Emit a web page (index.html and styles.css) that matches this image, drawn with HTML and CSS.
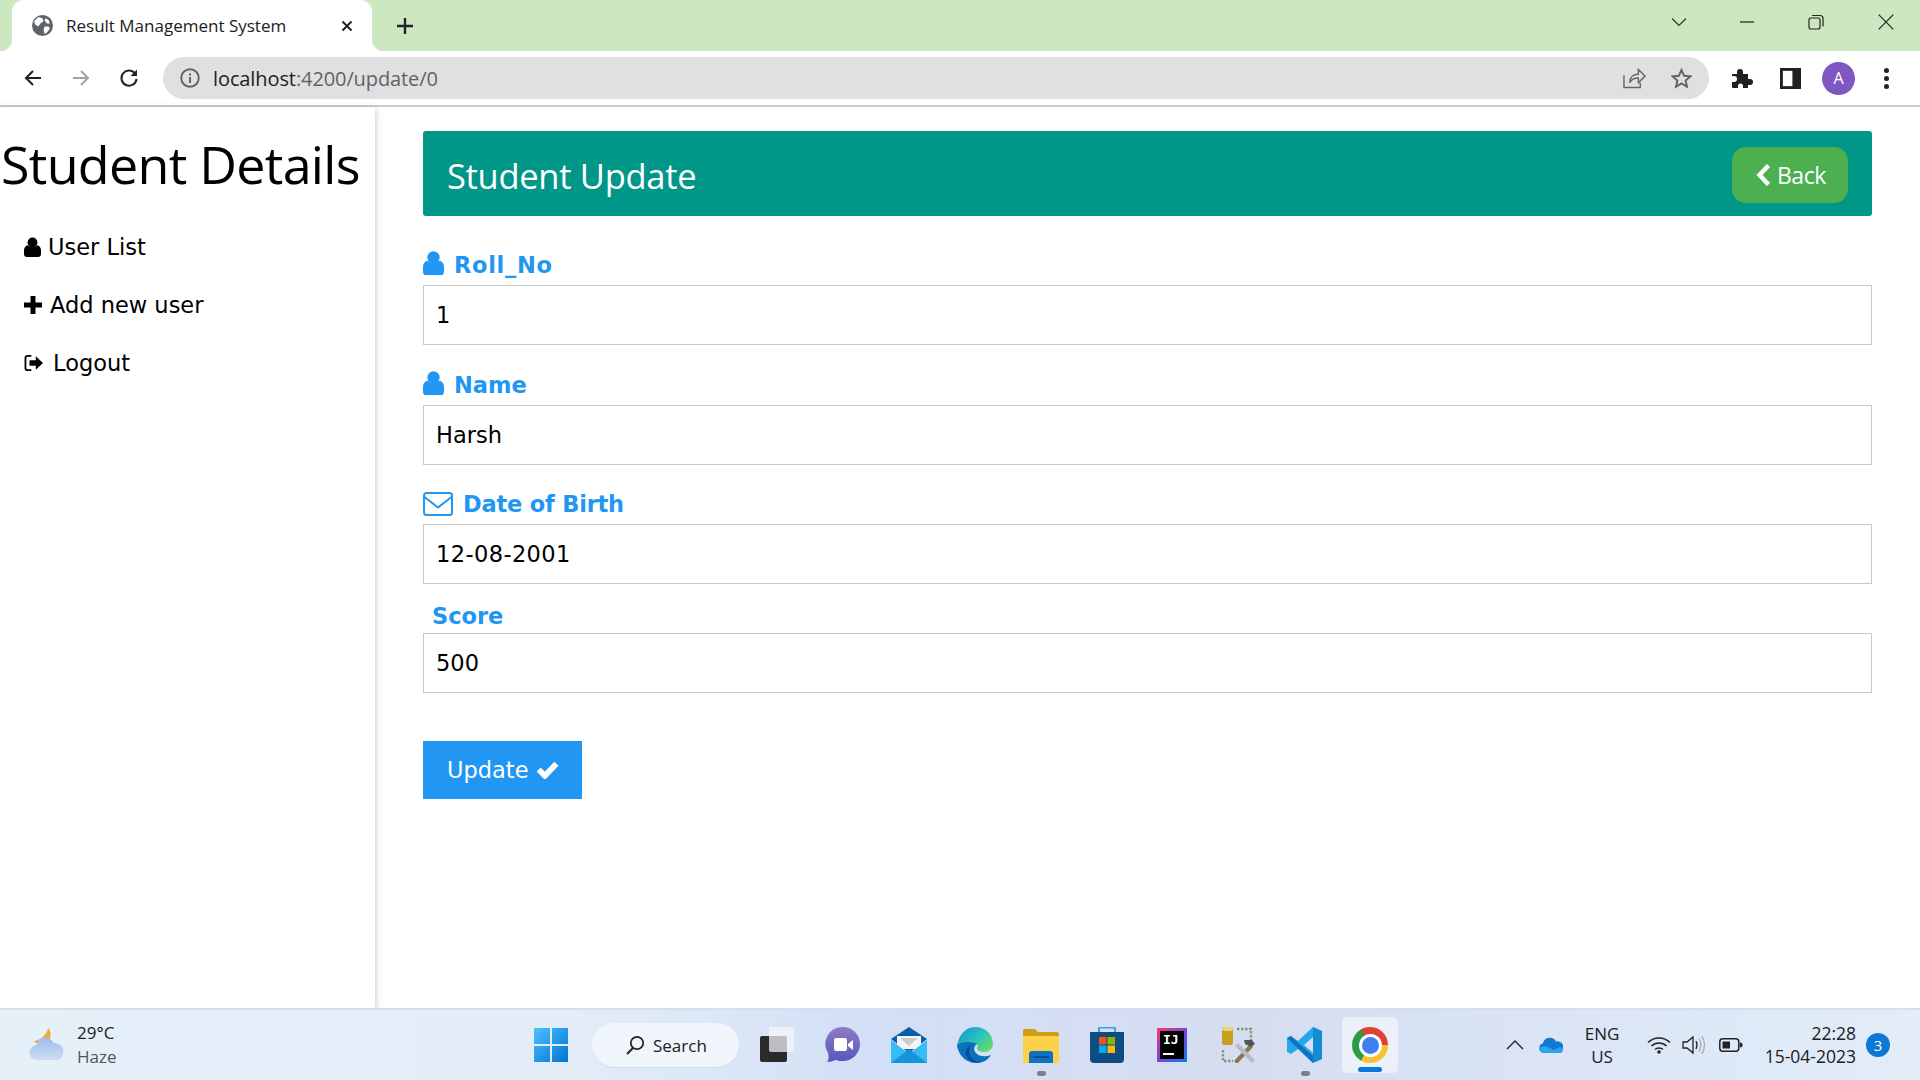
FILE: index.html
```html
<!DOCTYPE html>
<html lang="en">
<head>
  <meta charset="UTF-8">
  <title>Result Management System</title>
  <link rel="stylesheet" href="styles.css">
</head>
<body>
<div class="screen">

  <div class="tabstrip">
    <div class="tab">
      <svg class="tab-globe" viewBox="0 0 20 20"><circle cx="10" cy="10" r="10" fill="#5f6368"/><path d="M6 2l4 1 1 3-3 2-2 3-3-2-1-3zM12 11l4 0 1 2-3 4-2 1-1-4zM13 3l3 2 1 3-3 0-2-3z" fill="#fff"/></svg>
      <span class="tab-title">Result Management System</span>
      <svg class="tab-close" viewBox="0 0 12 12"><path d="M1.5 1.5l9 9M10.5 1.5l-9 9" stroke="#202124" stroke-width="2"/></svg>
    </div>
    <svg class="new-tab" viewBox="0 0 18 18"><path d="M9 1v16M1 9h16" stroke="#202124" stroke-width="2.4"/></svg>
    <div class="window-btns">
      <svg class="win-chevron" viewBox="0 0 16 10"><path d="M1 1.5l7 7 7-7" fill="none" stroke="#333" stroke-width="1.2"/></svg>
      <svg class="win-min" viewBox="0 0 16 10"><path d="M0 5h15" stroke="#222" stroke-width="1.3"/></svg>
      <svg class="win-restore" viewBox="0 0 16 16"><path d="M4 1.5h8q3 0 3 3v8M1 6q0-2 2-2h7q2 0 2 2v7q0 2-2 2H3q-2 0-2-2z" fill="none" stroke="#222" stroke-width="1.2"/></svg>
      <svg class="win-close" viewBox="0 0 16 16"><path d="M.7.7l14.6 14.6M15.3.7L.7 15.3" stroke="#222" stroke-width="1.2"/></svg>
    </div>
  </div>

  <div class="toolbar">
    <svg class="tool-icon" viewBox="0 0 20 20"><path d="M18 10H3M10 3l-7 7 7 7" fill="none" stroke="#202124" stroke-width="2"/></svg>
    <svg class="tool-icon" viewBox="0 0 20 20"><path d="M2 10h15M10 3l7 7-7 7" fill="none" stroke="#a3a3a3" stroke-width="2"/></svg>
    <svg class="tool-icon" viewBox="0 0 20 20"><path d="M16.500 6A7.600 7.600 0 1 0 17.600 11" fill="none" stroke="#202124" stroke-width="2"/><path d="M18 1.500v6.500h-6.500z" fill="#202124"/></svg>
    <div class="omnibox">
      <svg class="omni-info" viewBox="0 0 20 20"><circle cx="10" cy="10" r="8.800" fill="none" stroke="#5f6368" stroke-width="1.900"/><path d="M10 9v6M10 5.500v2" stroke="#5f6368" stroke-width="2"/></svg>
      <span class="url"><span class="url-host">localhost</span>:4200/update/0</span>
      <svg class="omni-share" viewBox="0 0 24 22"><path d="M1 8v13h17v-5M7 16c0-6 4-9 9-9V2l7 7-7 7v-5c-4 0-7 1-9 5z" fill="none" stroke="#666" stroke-width="1.500"/></svg>
      <svg class="omni-star" viewBox="0 0 22 22"><path d="M11 2l2.700 6.100 6.600.6-5 4.400 1.500 6.500L11 16.200l-5.800 3.400 1.500-6.500-5-4.400 6.600-.6z" fill="none" stroke="#5f6368" stroke-width="2"/></svg>
    </div>
    <svg class="ext-icon" viewBox="0 0 22 22"><path d="M1 7h5V5a3 3 0 0 1 6 0v2h5v5h2a3 3 0 0 1 0 6h-2v3h-5v-2a2.500 2.500 0 0 0-5 0v2H2q-1 0-1-1v-5h2a3 3 0 0 0 0-6H1z" fill="#202124"/></svg>
    <svg class="panel-icon" viewBox="0 0 22 22"><path d="M0 0h22v22H0z" fill="#202124"/><path d="M3 3h10v16H3z" fill="#fff"/></svg>
    <div class="avatar">A</div>
    <div class="dots"><i></i><i></i><i></i></div>
  </div>

  <div class="page">
    <aside class="sidebar">
      <h1 class="side-title">Student Details</h1>
      <a class="nav-item">
        <svg class="nav-icon icon-user" viewBox="0 0 24 28"><use href="#user"/></svg>User List
      </a>
      <a class="nav-item">
        <svg class="nav-icon icon-plus" viewBox="0 0 20 20"><path d="M10 0v20M0 10h20" stroke="#000" stroke-width="5.500"/></svg>Add new user
      </a>
      <a class="nav-item">
        <svg class="nav-icon icon-out" viewBox="0 0 22 20"><path d="M8 2H4Q1.500 2 1.500 4.500v11Q1.500 18 4 18h4" fill="none" stroke="#000" stroke-width="2"/><path d="M13 2.500L21 10l-8 7.500V13H6V7h7z" fill="#000"/></svg>Logout
      </a>
    </aside>

    <main class="content">
      <div class="panel-head">
        <h2 class="panel-title">Student Update</h2>
        <button class="back-btn">
          <svg class="back-icon" viewBox="0 0 14 24"><path d="M12 2.500L3 12l9 9.500" fill="none" stroke="#fff" stroke-width="4.500"/></svg>Back
        </button>
      </div>

      <form class="form">
        <div class="field">
          <label class="field-label label-roll"><svg class="label-user" viewBox="0 0 24 28"><use href="#user"/></svg>Roll_No</label>
          <input class="field-input" value="1">
        </div>
        <div class="field">
          <label class="field-label"><svg class="label-user" viewBox="0 0 24 28"><use href="#user"/></svg>Name</label>
          <input class="field-input" value="Harsh">
        </div>
        <div class="field">
          <label class="field-label label-dob"><svg class="label-mail" viewBox="0 0 30 24"><path d="M1 3.500Q1 1 3.500 1h23Q29 1 29 3.500v17q0 2.500-2.500 2.500h-23Q1 23 1 20.500z" fill="none" stroke="#2196f3" stroke-width="2"/><path d="M1.500 5L15 15.500 28.500 5" fill="none" stroke="#2196f3" stroke-width="2"/></svg>Date of Birth</label>
          <input class="field-input field-date" value="12-08-2001">
        </div>
        <div class="field field-plain">
          <label class="field-label">Score</label>
          <input class="field-input" value="500">
        </div>
        <button class="update-btn" type="button">Update
          <svg class="check-icon" viewBox="0 0 22 18"><path d="M2.500 9l6 6L19.500 3.500" fill="none" stroke="#fff" stroke-width="5.500"/></svg>
        </button>
      </form>
    </main>
  </div>

  <footer class="taskbar">
    <div class="weather">
      <svg class="weather-icon" viewBox="0 0 36 36"><defs><linearGradient id="cloud" x1="0" y1="0" x2="0" y2="1"><stop offset="0" stop-color="#9dbdf0"/><stop offset="1" stop-color="#cfdcf3"/></linearGradient></defs><path d="M19 1c3 4 3 11-1 14-3 2-10 3-14-1 6 0 12-5 15-13z" fill="#f2a93a"/><path d="M8 33a7.500 7.500 0 0 1-1-15 9 9 0 0 1 17-2 9 9 0 0 1 5 17z" fill="url(#cloud)"/></svg>
      <div class="weather-text"><span class="temp">29°C</span><span class="haze">Haze</span></div>
    </div>

    <div class="task-center">
      <svg class="task-icon" viewBox="0 0 36 36"><defs><linearGradient id="win" x1="0" y1="0" x2="1" y2="1"><stop offset="0" stop-color="#4cc2ff"/><stop offset="1" stop-color="#0073d1"/></linearGradient></defs><path d="M1 1h16v16H1zM19 1h16v16H19zM1 19h16v16H1zM19 19h16v16H19z" fill="url(#win)"/></svg>
      <div class="search-pill">
        <svg class="search-icon" viewBox="0 0 20 20"><circle cx="12" cy="8" r="6.200" fill="none" stroke="#222" stroke-width="1.700"/><path d="M8 13l-6 6" stroke="#222" stroke-width="2"/></svg>Search
      </div>
      <svg class="task-icon" viewBox="0 0 36 36"><rect x="1" y="9" width="27" height="26" rx="2" fill="#2b2b2b"/><rect x="10" y="0" width="25" height="25" rx="2" fill="#f4f6fb" opacity=".72"/></svg>
      <svg class="task-icon" viewBox="0 0 36 36"><defs><linearGradient id="meet" x1="0" y1="0" x2="0" y2="1"><stop offset="0" stop-color="#8f7bc4"/><stop offset="1" stop-color="#5458bf"/></linearGradient></defs><path d="M18 0a17 17 0 0 1 0 34c-2 0-5 0-7-1-3 1-6 2-9 2 2-3 2-6 1-9A17 17 0 0 1 18 0z" fill="url(#meet)"/><rect x="9" y="11" width="13" height="13" rx="2" fill="#fff"/><path d="M23 17l5-4v10l-5-4z" fill="#fff"/></svg>
      <svg class="task-icon" viewBox="0 0 36 36"><path d="M0 12L18 0l18 12-18 14z" fill="#0a5ea8"/><path d="M6 9h24v13H6z" fill="#f3f4f6"/><path d="M9 11h18l-9 8z" fill="#c9ccd2"/><path d="M0 13l18 14 18-14v23H0z" fill="#34bdf4"/><path d="M0 36l18-14 18 14z" fill="#1793d8"/></svg>
      <svg class="task-icon" viewBox="0 0 36 36"><defs><linearGradient id="edgeA" x1="0" y1="0" x2="1" y2=".7"><stop offset="0" stop-color="#1a8fd0"/><stop offset=".55" stop-color="#27bfc0"/><stop offset="1" stop-color="#5fdc6c"/></linearGradient></defs><path d="M18 0c10 0 18 7 18 17 0 5-4 8-9 8-4 0-7-2-7-4l1-3c-8-4-19 0-21 2C1 9 8 0 18 0z" fill="url(#edgeA)"/><path d="M0 18c1 10 9 18 19 18 7 0 12-3 15-8-5 2-12 2-15-2-3-3-2-7 1-9-8-4-18-1-20 1z" fill="#0c70bc"/><path d="M12 24c0 6 5 11 12 11-7 2-13-2-15-7-1-4 1-8 5-10-1 2-2 4-2 6z" fill="#074a94"/></svg>
      <div class="task-slot">
        <svg class="task-icon" viewBox="0 0 36 36"><path d="M0 4q0-2 2-2h10l3 3h19q2 0 2 2v4H0z" fill="#d39c10"/><path d="M0 9h36v27H0z" fill="#fdd14a"/><path d="M6 36v-9q0-3 3-3h18q3 0 3 3v9z" fill="#0f72c0"/><path d="M10 29h16v2H10z" fill="#0a4f92"/></svg>
        <i class="run-dot"></i>
      </div>
      <svg class="task-icon" viewBox="0 0 36 36"><path d="M10 6V2q0-1.500 1.500-1.500h13Q26 .5 26 2v4" fill="none" stroke="#2aa7e6" stroke-width="2"/><path d="M1 5h34v27q0 4-4 4H5q-4 0-4-4z" fill="#0f4c81"/><path d="M10 10h7.500v7.500H10z" fill="#f1511b"/><path d="M18.500 10H26v7.500h-7.500z" fill="#80bb00"/><path d="M10 18.500h7.500V26H10z" fill="#00adef"/><path d="M18.500 18.500H26V26h-7.500z" fill="#fbbc09"/></svg>
      <svg class="task-icon" viewBox="0 0 36 36"><defs><linearGradient id="ij" x1="0" y1="0" x2="1" y2="1"><stop offset="0" stop-color="#fc3a6b"/><stop offset=".5" stop-color="#7e41d9"/><stop offset="1" stop-color="#087cfa"/></linearGradient></defs><path d="M2 1h30v34H2z" fill="url(#ij)"/><path d="M5 4h24v28H5z" fill="#000"/><path d="M8 26h11v2H8z" fill="#fff"/><text class="ij-text" x="8" y="17">IJ</text></svg>
      <svg class="task-icon" viewBox="0 0 36 36"><rect x="1" y="0" width="11" height="18" rx="2" fill="#c7a022"/><rect x="1" y="0" width="11" height="4" rx="2" fill="#e6d37a"/><path d="M16 2h14v12M2 23v11h10" fill="none" stroke="#7f9a6c" stroke-width="2.400" stroke-dasharray="2.500 1.500"/><path d="M13 34L29 17l3 3-16 17z" fill="#8a7650"/><path d="M17 16l17 17-3 3-17-17z" fill="#b8bcc2"/><path d="M23 13h8l3 4-4 3-6-3z" fill="#51565c"/></svg>
      <div class="task-slot">
        <svg class="task-icon" viewBox="0 0 36 36"><path d="M26 0l9 4v28l-9 4-15-14-7 5-4-2V11l4-2 7 5zM26 10l-9 8 9 8z" fill="#23a7ec"/><path d="M26 0l9 4v28l-9 4z" fill="#0d7cc3" opacity=".6"/><path d="M0 11l4-2 22 20v7L0 11z" fill="#0f74bd"/></svg>
        <i class="run-dot"></i>
      </div>
      <div class="task-active">
        <div class="chrome-logo"><div class="chrome-core"></div></div>
        <i class="active-bar"></i>
      </div>
    </div>

    <div class="tray">
      <svg class="tray-chevron" viewBox="0 0 18 10"><path d="M1 9l8-8 8 8" fill="none" stroke="#222" stroke-width="1.400"/></svg>
      <svg class="tray-cloud" viewBox="0 0 24 16"><path d="M5 16a5 5 0 0 1-1-9.800 7 7 0 0 1 13-1.700A5.500 5.500 0 0 1 24 11c0 3-2 5-4 5z" fill="#0f78d4"/><path d="M5 16q-5-1-5-5 4-3 9-1l6 3 6-3q3 1 3 3 0 3-4 3z" fill="#2ba5ea"/></svg>
      <div class="lang"><span>ENG</span><span>US</span></div>
      <svg class="tray-wifi" viewBox="0 0 24 18"><path d="M1 6.500c6-6 16-6 22 0M4.500 10c4-4 11-4 15 0M8 13.500c2-2 6-2 8 0" fill="none" stroke="#222" stroke-width="1.500"/><circle cx="12" cy="16" r="1.800" fill="#222"/></svg>
      <svg class="tray-sound" viewBox="0 0 24 20"><path d="M1 7h4l6-5v16l-6-5H1z" fill="none" stroke="#222" stroke-width="1.300"/><path d="M14 6q2 4 0 8" fill="none" stroke="#222" stroke-width="1.300"/><path d="M17 3.500q3.500 6.500 0 13M20 1q5 9 0 18" fill="none" stroke="#aaa" stroke-width="1.300"/></svg>
      <svg class="tray-battery" viewBox="0 0 24 14"><rect x=".8" y=".8" width="19" height="12.400" rx="3" fill="none" stroke="#222" stroke-width="1.500"/><rect x="3.500" y="3.500" width="7.500" height="7" fill="#222"/><path d="M21 4.500q2.500 0 2.500 2.500T21 9.500z" fill="#222"/></svg>
      <div class="clock"><span>22:28</span><span>15-04-2023</span></div>
      <div class="notify">3</div>
    </div>
  </footer>
</div>

<svg class="sprite" width="0" height="0"><defs><symbol id="user" viewBox="0 0 24 28"><circle cx="12" cy="7.500" r="7"/><path d="M0 24v-5c0-4 2-7 5.500-7.500 2 1.500 4 2.500 6.500 2.500s4.500-1 6.500-2.500C22 12 24 15 24 19v5q0 4-4 4H4q-4 0-4-4z"/></symbol></defs></svg>
</body>
</html>
```

FILE: styles.css
```css
* {
  box-sizing: border-box;
}
html, body {
  margin: 0;
  padding: 0;
  height: 100%;
  overflow: hidden;
}
body {
  font-family: "DejaVu Sans", Verdana, sans-serif;
  font-size: 22.5px;
  color: #000;
  background: #fff;
}
.screen {
  display: flex;
  flex-direction: column;
  height: 1080px;
}
.sprite {
  position: absolute;
}

/* browser top */
.tabstrip {
  display: flex;
  align-items: center;
  flex: 0 0 51px;
  padding-left: 12px;
  background: #cce8c0;
}
.tab {
  display: flex;
  align-items: center;
  position: relative;
  align-self: stretch;
  width: 360px;
  padding: 0 19px 0 20px;
  background: #fff;
  border-radius: 12px 12px 0 0;
}
.tab::before, .tab::after {
  content: "";
  position: absolute;
  bottom: 0;
  width: 12px;
  height: 12px;
}
.tab::before {
  left: -12px;
  background: radial-gradient(circle at 0 0, transparent 12px, #fff 12.5px);
}
.tab::after {
  right: -12px;
  background: radial-gradient(circle at 100% 0, transparent 12px, #fff 12.5px);
}
.tab-globe {
  width: 21px;
  height: 21px;
  margin-right: 13px;
}
.tab-title {
  flex: 1;
  font-family: "Open Sans", sans-serif;
  font-size: 17px;
  color: #202124;
  white-space: nowrap;
}
.tab-close {
  width: 12px;
  height: 12px;
}
.new-tab {
  width: 18px;
  height: 18px;
  margin-left: 24px;
}
.window-btns {
  display: flex;
  align-items: center;
  margin-left: auto;
  margin-top: -8px;
  padding-right: 26px;
}
.win-chevron {
  width: 16px;
  height: 10px;
}
.win-min {
  width: 15px;
  height: 10px;
  margin-left: 53px;
}
.win-restore {
  width: 16px;
  height: 16px;
  margin-left: 53px;
}
.win-close {
  width: 16px;
  height: 16px;
  margin-left: 54px;
}
.toolbar {
  display: flex;
  align-items: center;
  flex: 0 0 56px;
  padding: 0 0 0 23px;
  background: #fff;
  border-bottom: 2px solid #cdcdcd;
}
.tool-icon {
  width: 20px;
  height: 20px;
  margin-right: 28px;
}
.tool-icon:nth-of-type(3) {
  margin-right: 24px;
}
.omnibox {
  display: flex;
  align-items: center;
  width: 1546px;
  height: 42px;
  padding: 0 17px 0 17px;
  background: #e0e0e0;
  border-radius: 21px;
}
.omni-info {
  width: 20px;
  height: 20px;
  margin-right: 13px;
}
.url {
  flex: 1;
  font-family: "Open Sans", sans-serif;
  font-size: 20px;
  letter-spacing: -0.1px;
  color: #5f6368;
}
.url-host {
  color: #202124;
}
.omni-share {
  width: 23px;
  height: 22px;
  margin-right: 25px;
}
.omni-star {
  width: 21px;
  height: 21px;
}
.ext-icon {
  width: 22px;
  height: 22px;
  margin-left: 22px;
}
.panel-icon {
  width: 21px;
  height: 21px;
  margin-left: 27px;
}
.avatar {
  display: flex;
  align-items: center;
  justify-content: center;
  width: 33px;
  height: 33px;
  margin-left: 21px;
  border-radius: 50%;
  background: #7e57c2;
  color: #fff;
  font-family: "Open Sans", sans-serif;
  font-size: 16px;
}
.dots {
  display: flex;
  flex-direction: column;
  gap: 3px;
  margin-left: 29px;
}
.dots i {
  width: 5px;
  height: 5px;
  border-radius: 50%;
  background: #202124;
}

/* page */
.page {
  display: flex;
  flex: 1;
  min-height: 0;
}
.sidebar {
  flex: 0 0 375px;
  box-shadow: 0 2px 5px rgba(0,0,0,0.16), 0 2px 10px rgba(0,0,0,0.12);
}
.side-title {
  margin: 21px 0 18px;
  padding-left: 1px;
  font-family: "Open Sans", sans-serif;
  font-size: 52px;
  font-weight: 400;
  line-height: 72px;
  letter-spacing: -0.7px;
  white-space: nowrap;
}
.nav-item {
  display: flex;
  align-items: center;
  height: 58px;
  padding-left: 24px;
}
.nav-icon {
  flex: none;
  fill: #000;
}
.icon-user {
  width: 17px;
  height: 20px;
  margin-right: 7px;
}
.icon-plus {
  width: 18px;
  height: 18px;
  margin-right: 8px;
}
.icon-out {
  width: 20px;
  height: 18px;
  margin-right: 9px;
}
.content {
  flex: 1;
  padding: 24px 48px 0;
  min-width: 0;
}
.panel-head {
  display: flex;
  align-items: center;
  justify-content: space-between;
  height: 85px;
  padding: 0 24px;
  background: #009688;
  border-radius: 3px;
}
.panel-title {
  margin: 3px 0 0;
  font-family: "Open Sans", sans-serif;
  font-size: 34.5px;
  font-weight: 400;
  letter-spacing: -0.3px;
  color: #fff;
}
.back-btn {
  display: flex;
  align-items: center;
  width: 116px;
  height: 56px;
  margin-top: 3px;
  padding: 0 0 0 24px;
  border: none;
  border-radius: 14px;
  background: #4caf50;
  color: #fff;
  font-family: "Open Sans", sans-serif;
  font-size: 23px;
  letter-spacing: -0.5px;
}
.back-icon {
  width: 15px;
  height: 24px;
  margin-right: 6px;
}
.form {
  padding-top: 24px;
}
.field {
  margin-bottom: 14.6px;
}
.field-label {
  display: flex;
  align-items: flex-end;
  height: 45px;
  padding-bottom: 3px;
  font-weight: bold;
  line-height: 34px;
  color: #2196f3;
}
.label-roll {
  letter-spacing: 0.7px;
}
.label-dob {
  letter-spacing: -0.2px;
}
.field-plain {
  margin-bottom: 48px;
}
.field-plain .field-label {
  height: 34px;
  padding: 0 0 0 9px;
}
.label-user {
  width: 21px;
  height: 26px;
  margin: 0 10px 6px 0;
  fill: #2196f3;
}
.label-mail {
  width: 30px;
  height: 24px;
  margin: 0 10px 5px 0;
}
.field-input {
  display: block;
  width: 100%;
  height: 60px;
  padding: 0 12px;
  border: 1px solid #c8c8c8;
  font: inherit;
  color: #000;
  background: #fff;
}
.field-date {
  letter-spacing: 0.4px;
}
.update-btn {
  display: flex;
  align-items: center;
  width: 159px;
  height: 58px;
  padding: 0 0 0 24px;
  border: none;
  background: #2196f3;
  color: #fff;
  font: inherit;
}
.check-icon {
  width: 23px;
  height: 19px;
  margin-left: 7px;
}

/* windows taskbar */
.taskbar {
  display: flex;
  align-items: center;
  flex: 0 0 72px;
  border-top: 2px solid #d6deea;
  background: linear-gradient(90deg, #e6f0f9 0%, #e3edf8 30%, #d3dff6 45%, #d6ddf1 65%, #d8e2f5 75%, #e2edf8 100%);
  font-family: "Open Sans", sans-serif;
  color: #202020;
}
.weather {
  display: flex;
  align-items: center;
  flex: 0 0 528px;
  padding-left: 29px;
}
.weather-icon {
  width: 37px;
  height: 36px;
  margin-right: 11px;
}
.weather-text {
  display: flex;
  flex-direction: column;
  font-size: 17px;
  line-height: 24px;
}
.haze {
  color: #555;
}
.task-center {
  display: flex;
  align-items: center;
  flex: 0 0 871px;
}
.task-icon {
  display: block;
  flex: none;
  width: 36px;
  height: 36px;
  margin: 0 15px;
}
.task-center > .task-icon:first-child {
  margin: 0 23px 0 5px;
}
.task-slot {
  position: relative;
}
.run-dot {
  position: absolute;
  left: 29px;
  bottom: -13px;
  width: 9px;
  height: 5px;
  border-radius: 3px;
  background: #7b808a;
}
.search-pill {
  display: flex;
  align-items: center;
  flex: none;
  width: 147px;
  height: 44px;
  margin-right: 5px;
  padding-left: 33px;
  border-radius: 22px;
  background: #f1f5fc;
  box-shadow: 0 1px 1px rgba(0,0,0,0.06);
  font-size: 17px;
}
.search-icon {
  width: 20px;
  height: 20px;
  margin-right: 8px;
}
.task-active {
  display: flex;
  align-items: center;
  justify-content: center;
  position: relative;
  flex: none;
  width: 56px;
  height: 56px;
  margin-left: 4px;
  border-radius: 5px;
  background: #ecf0f9;
}
.chrome-logo {
  display: flex;
  align-items: center;
  justify-content: center;
  width: 36px;
  height: 36px;
  border-radius: 50%;
  background: conic-gradient(from 90deg, #fbc02d 0 120deg, #2e9a48 120deg 240deg, #dd4337 240deg 360deg);
}
.chrome-core {
  width: 17px;
  height: 17px;
  border-radius: 50%;
  background: #3f7ff0;
  box-shadow: 0 0 0 3px #fff;
}
.active-bar {
  position: absolute;
  left: 16px;
  bottom: 1px;
  width: 24px;
  height: 5px;
  border-radius: 3px;
  background: #0a78d4;
}
.ij-text {
  font-family: "DejaVu Sans Mono", monospace;
  font-size: 13px;
  font-weight: bold;
  fill: #fff;
}
.tray {
  display: flex;
  align-items: center;
  flex: 1;
  padding-left: 107px;
}
.tray-chevron {
  width: 18px;
  height: 10px;
}
.tray-cloud {
  width: 24px;
  height: 16px;
  margin-left: 15px;
}
.lang {
  display: flex;
  flex-direction: column;
  align-items: center;
  width: 44px;
  margin-left: 17px;
  font-size: 17px;
  line-height: 23px;
}
.tray-wifi {
  width: 24px;
  height: 18px;
  margin-left: 23px;
}
.tray-sound {
  width: 24px;
  height: 20px;
  margin-left: 11px;
}
.tray-battery {
  width: 24px;
  height: 14px;
  margin-left: 13px;
}
.clock {
  display: flex;
  flex-direction: column;
  align-items: flex-end;
  width: 100px;
  margin-left: 13px;
  font-size: 17.5px;
  line-height: 23px;
}
.notify {
  display: flex;
  align-items: center;
  justify-content: center;
  width: 24px;
  height: 24px;
  margin-left: 10px;
  border-radius: 50%;
  background: #0a78d4;
  color: #fff;
  font-size: 15px;
}
```
